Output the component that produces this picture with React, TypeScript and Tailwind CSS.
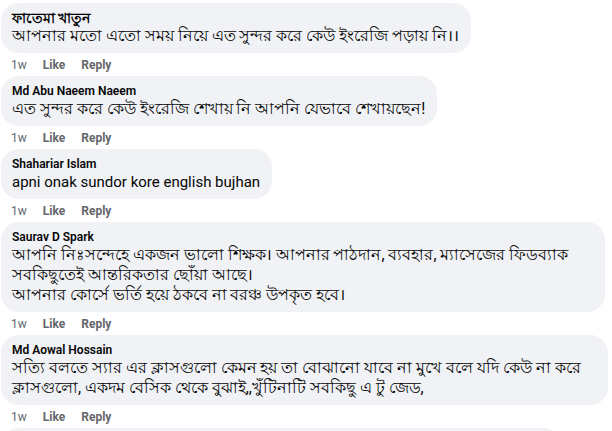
import React from "react";

interface Comment {
  name: string;
  lines: string[];
  width?: string;
}

const comments: Comment[] = [
  { name: "ফাতেমা খাতুন", lines: ["আপনার মতো এতো সময় নিয়ে এত সুন্দর করে কেউ ইংরেজি পড়ায় নি।।"] },
  { name: "Md Abu Naeem Naeem", lines: ["এত সুন্দর করে কেউ ইংরেজি শেখায় নি আপনি যেভাবে শেখায়ছেন!"] },
  { name: "Shahariar Islam", lines: ["apni onak sundor kore english bujhan"] },
  {
    name: "Saurav D Spark",
    width: "w-[604px]",
    lines: [
      "আপনি নিঃসন্দেহে একজন ভালো শিক্ষক। আপনার পাঠদান, ব্যবহার, ম্যাসেজের ফিডব্যাক",
      "সবকিছুতেই আন্তরিকতার ছোঁয়া আছে।",
      "আপনার কোর্সে ভর্তি হয়ে ঠকবে না বরঞ্চ উপকৃত হবে।",
    ],
  },
  {
    name: "Md Aowal Hossain",
    width: "w-[607px]",
    lines: [
      "সত্যি বলতে স্যার এর ক্লাসগুলো কেমন হয় তা বোঝানো যাবে না মুখে বলে যদি কেউ না করে",
      "ক্লাসগুলো, একদম বেসিক থেকে বুঝাই,,খুঁটিনাটি সবকিছু এ টু জেড,",
    ],
  },
];

const isLatin = (s: string) => /[a-z]/i.test(s);

function CommentRow({ c }: { c: Comment }) {
  return (
    <div className="flex flex-col items-start">
      <div
        className={`rounded-[18px] bg-[#f0f2f5] pl-[11px] pr-[12px] pt-[8px] pb-[7px] text-[#050505] ${c.width ?? ""}`}
      >
        <div
          className={
            isLatin(c.name)
              ? "text-[12px] font-semibold leading-[15px] whitespace-nowrap"
              : "text-[14px] font-bold leading-[15px] whitespace-nowrap"
          }
        >
          {c.name}
        </div>
        {c.lines.map((l, i) => (
          <div
            key={i}
            className={
              isLatin(l)
                ? "text-[15px] leading-[20px] whitespace-nowrap"
                : "text-[15.75px] leading-[20px] whitespace-nowrap"
            }
          >
            {l}
          </div>
        ))}
      </div>
      <div className="flex h-[23px] items-center gap-[16px] pl-[10px] text-[12px] text-[#65676b]">
        <span>1w</span>
        <span className="font-bold">Like</span>
        <span className="font-bold">Reply</span>
      </div>
    </div>
  );
}

export default function App() {
  return (
    <div
      className="w-[612px] h-[431px] overflow-hidden bg-white pt-[3px] pl-[1px]"
      style={{ fontFamily: 'Roboto, "Noto Sans", sans-serif' }}
    >
      {comments.map((c, i) => (
        <CommentRow key={i} c={c} />
      ))}
      <div className="h-[50px] w-[560px] rounded-[18px] bg-[#f0f2f5]" />
    </div>
  );
}
